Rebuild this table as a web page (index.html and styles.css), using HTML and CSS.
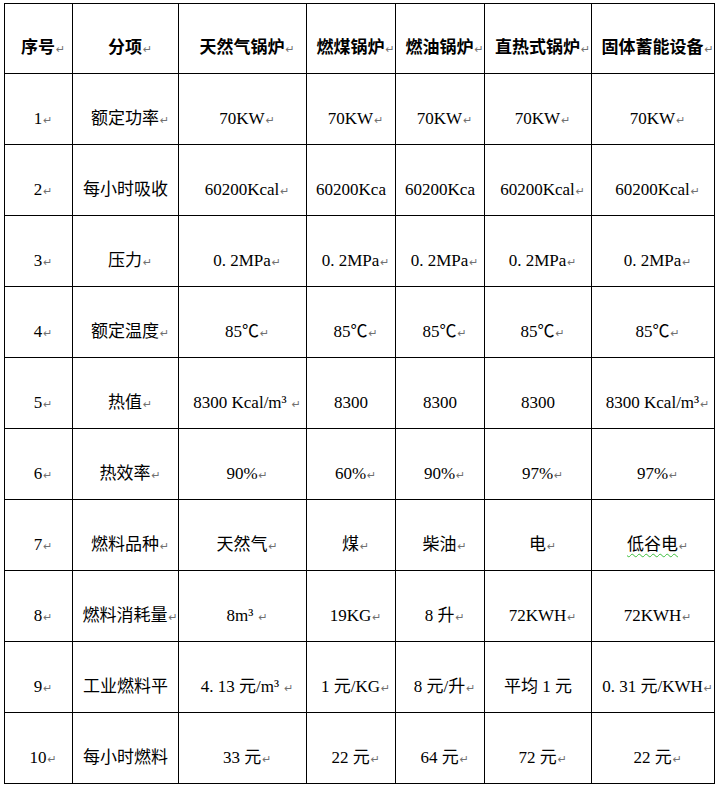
FILE: index.html
```html
<!DOCTYPE html>
<html lang="zh-CN">
<head>
<meta charset="utf-8">
<title>锅炉对比</title>
<link rel="stylesheet" href="styles.css">
</head>
<body>
<div class="sheet">
  <div class="row head">
    <div class="cell"><p class="v">序号<span class="pm">↵</span></p></div>
    <div class="cell"><p class="v">分项<span class="pm">↵</span></p></div>
    <div class="cell"><p class="v">天然气锅炉<span class="pm">↵</span></p></div>
    <div class="cell"><p class="v">燃煤锅炉<span class="pm">↵</span></p></div>
    <div class="cell"><p class="v">燃油锅炉<span class="pm">↵</span></p></div>
    <div class="cell"><p class="v">直热式锅炉<span class="pm">↵</span></p></div>
    <div class="cell"><p class="v">固体蓄能设备<span class="pm">↵</span></p></div>
  </div>
  <div class="row">
    <div class="cell"><p class="v">1<span class="pm">↵</span></p></div>
    <div class="cell"><p class="v">额定功率<span class="pm">↵</span></p></div>
    <div class="cell"><p class="v">70KW<span class="pm">↵</span></p></div>
    <div class="cell"><p class="v">70KW<span class="pm">↵</span></p></div>
    <div class="cell"><p class="v">70KW<span class="pm">↵</span></p></div>
    <div class="cell"><p class="v">70KW<span class="pm">↵</span></p></div>
    <div class="cell"><p class="v">70KW<span class="pm">↵</span></p></div>
  </div>
  <div class="row">
    <div class="cell"><p class="v">2<span class="pm">↵</span></p></div>
    <div class="cell"><p class="v">每小时吸收</p></div>
    <div class="cell"><p class="v">60200Kcal<span class="pm">↵</span></p></div>
    <div class="cell"><p class="v">60200Kca</p></div>
    <div class="cell"><p class="v">60200Kca</p></div>
    <div class="cell"><p class="v">60200Kcal<span class="pm">↵</span></p></div>
    <div class="cell"><p class="v">60200Kcal<span class="pm">↵</span></p></div>
  </div>
  <div class="row">
    <div class="cell"><p class="v">3<span class="pm">↵</span></p></div>
    <div class="cell"><p class="v">压力<span class="pm">↵</span></p></div>
    <div class="cell"><p class="v">0.&nbsp;2MPa<span class="pm">↵</span></p></div>
    <div class="cell"><p class="v">0.&nbsp;2MPa<span class="pm">↵</span></p></div>
    <div class="cell"><p class="v">0.&nbsp;2MPa<span class="pm">↵</span></p></div>
    <div class="cell"><p class="v">0.&nbsp;2MPa<span class="pm">↵</span></p></div>
    <div class="cell"><p class="v">0.&nbsp;2MPa<span class="pm">↵</span></p></div>
  </div>
  <div class="row">
    <div class="cell"><p class="v">4<span class="pm">↵</span></p></div>
    <div class="cell"><p class="v">额定温度<span class="pm">↵</span></p></div>
    <div class="cell"><p class="v">85℃<span class="pm">↵</span></p></div>
    <div class="cell"><p class="v">85℃<span class="pm">↵</span></p></div>
    <div class="cell"><p class="v">85℃<span class="pm">↵</span></p></div>
    <div class="cell"><p class="v">85℃<span class="pm">↵</span></p></div>
    <div class="cell"><p class="v">85℃<span class="pm">↵</span></p></div>
  </div>
  <div class="row">
    <div class="cell"><p class="v">5<span class="pm">↵</span></p></div>
    <div class="cell"><p class="v">热值<span class="pm">↵</span></p></div>
    <div class="cell"><p class="v">8300 Kcal/m³<span class="pm gap">↵</span></p></div>
    <div class="cell"><p class="v">8300</p></div>
    <div class="cell"><p class="v">8300</p></div>
    <div class="cell"><p class="v">8300</p></div>
    <div class="cell"><p class="v">8300 Kcal/m³<span class="pm">↵</span></p></div>
  </div>
  <div class="row">
    <div class="cell"><p class="v">6<span class="pm">↵</span></p></div>
    <div class="cell"><p class="v">热效率<span class="pm">↵</span></p></div>
    <div class="cell"><p class="v">90%<span class="pm">↵</span></p></div>
    <div class="cell"><p class="v">60%<span class="pm">↵</span></p></div>
    <div class="cell"><p class="v">90%<span class="pm">↵</span></p></div>
    <div class="cell"><p class="v">97%<span class="pm">↵</span></p></div>
    <div class="cell"><p class="v">97%<span class="pm">↵</span></p></div>
  </div>
  <div class="row">
    <div class="cell"><p class="v">7<span class="pm">↵</span></p></div>
    <div class="cell"><p class="v">燃料品种<span class="pm">↵</span></p></div>
    <div class="cell"><p class="v">天然气<span class="pm">↵</span></p></div>
    <div class="cell"><p class="v">煤<span class="pm">↵</span></p></div>
    <div class="cell"><p class="v">柴油<span class="pm">↵</span></p></div>
    <div class="cell"><p class="v">电<span class="pm">↵</span></p></div>
    <div class="cell"><p class="v"><span class="spell">低谷电</span><span class="pm">↵</span></p></div>
  </div>
  <div class="row">
    <div class="cell"><p class="v">8<span class="pm">↵</span></p></div>
    <div class="cell"><p class="v">燃料消耗量<span class="pm">↵</span></p></div>
    <div class="cell"><p class="v">8m³<span class="pm gap">↵</span></p></div>
    <div class="cell"><p class="v">19KG<span class="pm">↵</span></p></div>
    <div class="cell"><p class="v">8 升<span class="pm">↵</span></p></div>
    <div class="cell"><p class="v">72KWH<span class="pm">↵</span></p></div>
    <div class="cell"><p class="v">72KWH<span class="pm">↵</span></p></div>
  </div>
  <div class="row">
    <div class="cell"><p class="v">9<span class="pm">↵</span></p></div>
    <div class="cell"><p class="v">工业燃料平</p></div>
    <div class="cell"><p class="v">4.&nbsp;13 元/m³<span class="pm gap">↵</span></p></div>
    <div class="cell"><p class="v">1 元/KG<span class="pm">↵</span></p></div>
    <div class="cell"><p class="v">8 元/升<span class="pm">↵</span></p></div>
    <div class="cell"><p class="v">平均 1 元</p></div>
    <div class="cell"><p class="v">0.&nbsp;31 元/KWH<span class="pm">↵</span></p></div>
  </div>
  <div class="row">
    <div class="cell"><p class="v">10<span class="pm">↵</span></p></div>
    <div class="cell"><p class="v">每小时燃料</p></div>
    <div class="cell"><p class="v">33 元<span class="pm">↵</span></p></div>
    <div class="cell"><p class="v">22 元<span class="pm">↵</span></p></div>
    <div class="cell"><p class="v">64 元<span class="pm">↵</span></p></div>
    <div class="cell"><p class="v">72 元<span class="pm">↵</span></p></div>
    <div class="cell"><p class="v">22 元<span class="pm">↵</span></p></div>
  </div>
</div>
</body>
</html>
```
FILE: styles.css
```css
html, body {
  margin: 0;
  padding: 0;
  background: #fff;
}

body {
  font-family: "Liberation Serif", "Noto Sans CJK SC", serif;
  font-size: 17px;
  color: #000;
}

.sheet {
  margin: 3px 0 0 4px;
  width: max-content;
  display: grid;
  gap: 1px;
  border: 1px solid #000;
  background: #000;
}

.row {
  display: grid;
  grid-template-columns: 67px 105px 127px 88px 88px 106px 122px;
  gap: 1px;
  height: 70px;
}

.row.head {
  height: 69px;
}

.cell {
  background: #fff;
  display: flex;
  justify-content: center;
  align-items: flex-end;
  padding-bottom: 15px;
  box-sizing: border-box;
  overflow: hidden;
}

.v {
  margin: 0;
  line-height: 20px;
  white-space: nowrap;
}

.head .v {
  font-weight: bold;
}

.pm {
  display: inline-block;
  width: 0;
  margin-left: 1px;
  white-space: nowrap;
  font-family: "DejaVu Sans", sans-serif;
  font-size: 11px;
  font-weight: normal;
  color: #707070;
  line-height: 1;
}

.pm.gap {
  margin-left: 5px;
}

.spell {
  text-decoration: underline wavy #3cbf3c;
  text-decoration-thickness: 1px;
  text-underline-offset: 3px;
}
```
